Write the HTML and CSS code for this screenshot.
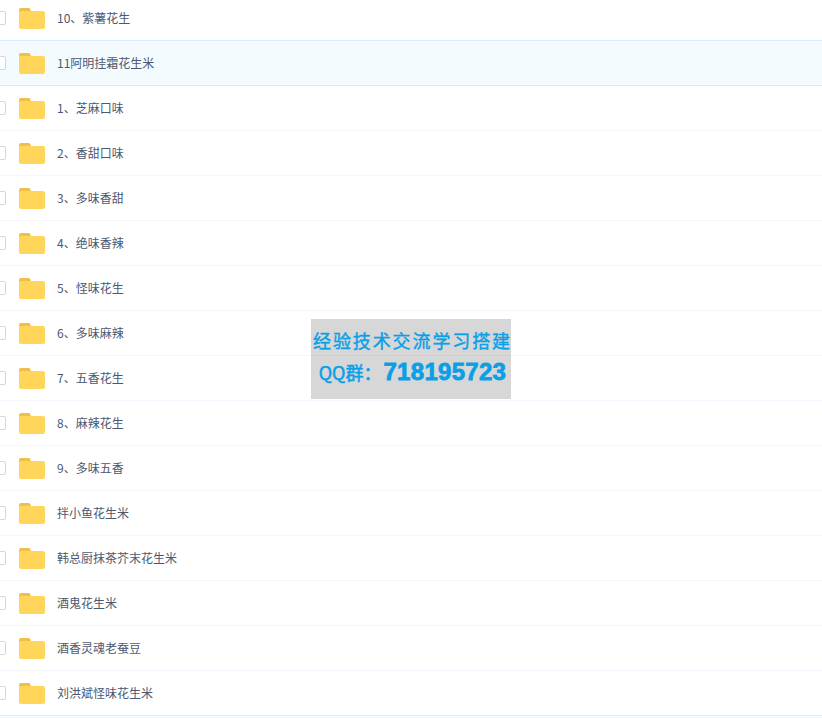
FILE: index.html
```html
<!DOCTYPE html>
<html lang="zh-CN">
<head>
<meta charset="utf-8">
<title>文件列表</title>
<link rel="stylesheet" href="styles.css">
</head>
<body>
<svg class="defs" width="0" height="0" aria-hidden="true"><defs>
<symbol id="folder" viewBox="0 0 26 21">
<path d="M0 2a2 2 0 0 1 2-2h7.5a2 2 0 0 1 2 1.6L12 4H0z" fill="#f0bf4a"/>
<path d="M0 5a2 2 0 0 1 2-2h22a2 2 0 0 1 2 2v14a2 2 0 0 1-2 2H2a2 2 0 0 1-2-2z" fill="#ffd659"/>
</symbol></defs></svg>
<ul class="list">
<li class="row"><span class="check"></span><svg class="folder"><use href="#folder"/></svg><span class="name">10、紫薯花生</span></li>
<li class="row active"><span class="check"></span><svg class="folder"><use href="#folder"/></svg><span class="name">11阿明挂霜花生米</span></li>
<li class="row"><span class="check"></span><svg class="folder"><use href="#folder"/></svg><span class="name">1、芝麻口味</span></li>
<li class="row"><span class="check"></span><svg class="folder"><use href="#folder"/></svg><span class="name">2、香甜口味</span></li>
<li class="row"><span class="check"></span><svg class="folder"><use href="#folder"/></svg><span class="name">3、多味香甜</span></li>
<li class="row"><span class="check"></span><svg class="folder"><use href="#folder"/></svg><span class="name">4、绝味香辣</span></li>
<li class="row"><span class="check"></span><svg class="folder"><use href="#folder"/></svg><span class="name">5、怪味花生</span></li>
<li class="row"><span class="check"></span><svg class="folder"><use href="#folder"/></svg><span class="name">6、多味麻辣</span></li>
<li class="row"><span class="check"></span><svg class="folder"><use href="#folder"/></svg><span class="name">7、五香花生</span></li>
<li class="row"><span class="check"></span><svg class="folder"><use href="#folder"/></svg><span class="name">8、麻辣花生</span></li>
<li class="row"><span class="check"></span><svg class="folder"><use href="#folder"/></svg><span class="name">9、多味五香</span></li>
<li class="row"><span class="check"></span><svg class="folder"><use href="#folder"/></svg><span class="name">拌小鱼花生米</span></li>
<li class="row"><span class="check"></span><svg class="folder"><use href="#folder"/></svg><span class="name">韩总厨抹茶芥末花生米</span></li>
<li class="row"><span class="check"></span><svg class="folder"><use href="#folder"/></svg><span class="name">酒鬼花生米</span></li>
<li class="row"><span class="check"></span><svg class="folder"><use href="#folder"/></svg><span class="name">酒香灵魂老蚕豆</span></li>
<li class="row last"><span class="check"></span><svg class="folder"><use href="#folder"/></svg><span class="name">刘洪斌怪味花生米</span></li>
<li class="row-end"></li>
</ul>
<div class="promo">
<p class="promo-title">经验技术交流学习搭建</p>
<p class="promo-qq"><span class="qq-label">QQ群：</span>718195723</p>
</div>
</body>
</html>
```
FILE: styles.css
```css
html, body {
  margin: 0;
  padding: 0;
  height: 718px;
  overflow: hidden;
  background: #fff;
}
.defs { display: block; height: 0; }
.list {
  list-style: none;
  margin: -4px 0 0;
  padding: 0;
}
.row {
  display: flex;
  align-items: center;
  box-sizing: border-box;
  height: 45px;
  border-bottom: 1px solid #f2f6fd;
  font: 12px/1 "Noto Sans CJK SC", "Noto Sans", sans-serif;
  color: #4c5870;
}
.row.active {
  background: #f4fbff;
  border-bottom-color: #daebfa;
  box-shadow: 0 -1px 0 #daebfa;
}
.row.last { border-bottom-color: #daebfa; }
.row-end {
  height: 2px;
  background: #f4fbff;
}
.check {
  flex: none;
  box-sizing: border-box;
  width: 14px;
  height: 14px;
  margin-left: -8px;
  border: 1px solid #d4d7e0;
  border-radius: 2px;
  background: #fff;
}
.folder {
  flex: none;
  width: 26px;
  height: 21px;
  margin-left: 13px;
}
.name { margin-left: 12px; white-space: nowrap; }
.promo {
  position: absolute;
  left: 311px;
  top: 319px;
  width: 200px;
  height: 80px;
  background: rgba(0, 0, 0, 0.157);
  color: #0a9fe6;
  text-align: center;
  white-space: nowrap;
}
.promo p { margin: 0; }
.promo-title {
  font: 18px/22px "Noto Sans CJK SC", serif;
  -webkit-text-stroke: 0.4px #0a9fe6;
  letter-spacing: 1.9px;
  padding-top: 10px;
  padding-left: 2px;
}
.promo-qq {
  font: 900 24px/26px "Liberation Sans", sans-serif;
  -webkit-text-stroke: 0.8px #0a9fe6;
  padding-top: 8px;
  padding-left: 3px;
  letter-spacing: 0.3px;
}
.qq-label {
  font: 18px/26px "Noto Sans CJK SC", sans-serif;
  -webkit-text-stroke: 0.5px #0a9fe6;
  letter-spacing: 0;
  margin-right: 2px;
}
```
